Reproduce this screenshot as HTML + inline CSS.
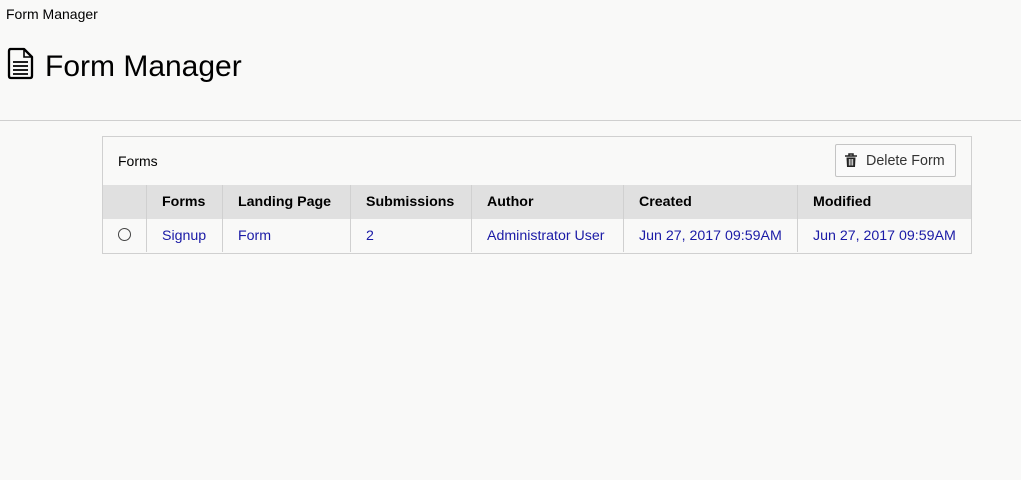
<!DOCTYPE html>
<html><head><style>
body{margin:0;background:#f9f9f8;font-family:"Liberation Sans",sans-serif;color:#000;width:1021px;height:480px;position:relative;overflow:hidden}
.a{position:absolute}
.bc{left:6px;top:6px;font-size:14px}
h1{position:absolute;left:45px;top:49px;margin:0;font-size:30px;font-weight:normal;line-height:36px}
.hr{left:0;top:120px;width:1021px;height:1px;background:#cfcfcf}
.panel{left:102px;top:136px;width:868px;height:116px;border:1px solid #d0d0d0}
.ptitle{left:15px;top:16px;font-size:14px}
.btn{left:732px;top:7px;width:121px;height:33px;border:1px solid #c4c4c4;border-radius:2px;background:#fafafa;font-size:14.3px;color:#333;box-sizing:border-box}
table{position:absolute;left:0;top:48px;border-collapse:collapse;font-size:14.2px;width:868px}
th,td{height:33px;padding:0 0 0 15px;text-align:left;border-left:1px solid #d0d0d0;white-space:nowrap}
th{background:#e0e0e0;font-weight:bold}
td{color:#1a1aa6;border-top:1px solid #e0e0e0}
th:first-child,td:first-child{border-left:none;padding:0;text-align:center}
</style></head><body>
<div class="a bc">Form Manager</div>
<svg class="a" style="left:7px;top:47px" width="27" height="33" viewBox="0 0 27 33"><path d="M3 2H17L25 10V29Q25 31 23 31H4Q2 31 2 29V4Q2 2 4 2Z" fill="none" stroke="#000" stroke-width="2.3" stroke-linejoin="round"/><path d="M17 2V10H25" fill="none" stroke="#000" stroke-width="1.6"/><path d="M6 15H21M6 19H21M6 23H21M6 27H21" stroke="#000" stroke-width="1.7"/></svg>
<h1>Form Manager</h1>
<div class="a hr"></div>
<div class="a panel">
<div class="a ptitle">Forms</div>
<div class="a btn"><svg class="a" style="left:9px;top:8px" width="12" height="15" viewBox="0 0 12 15"><path d="M0 3H12M4 3V1H8V3" fill="none" stroke="#222" stroke-width="1.5"/><path d="M1.5 4.5H10.5L10 14H2Z" fill="#222"/><path d="M4.3 6V12.5M6 6V12.5M7.7 6V12.5" stroke="#fafafa" stroke-width="0.9"/></svg><span class="a" style="left:30px;top:8px">Delete Form</span></div>
<table>
<tr><th style="width:43px"></th><th style="width:60px">Forms</th><th style="width:112px">Landing Page</th><th style="width:105px">Submissions</th><th style="width:136px">Author</th><th style="width:158px">Created</th><th>Modified</th></tr>
<tr><td><span style="display:inline-block;width:11px;height:11px;border:1px solid #444;border-radius:50%;vertical-align:middle;margin-top:-3px"></span></td><td>Signup</td><td>Form</td><td>2</td><td>Administrator User</td><td>Jun 27, 2017 09:59AM</td><td>Jun 27, 2017 09:59AM</td></tr>
</table>
</div>
</body></html>
